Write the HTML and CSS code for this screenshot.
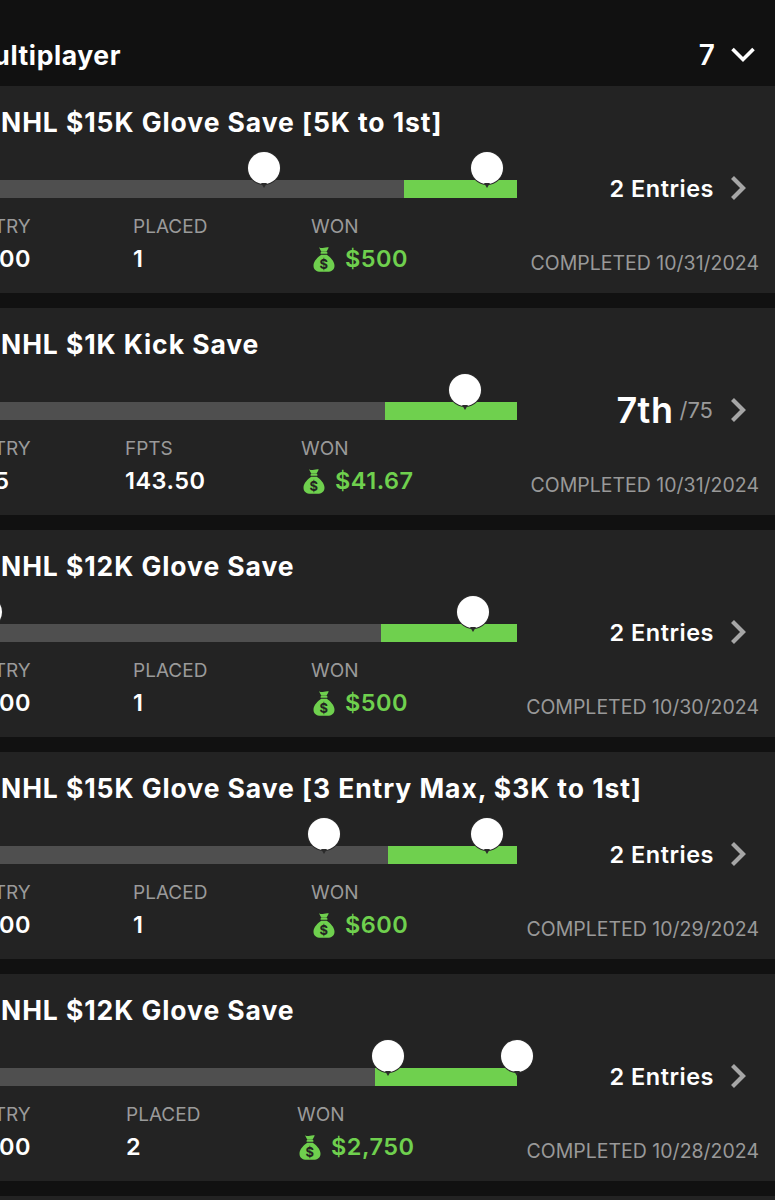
FILE: index.html
```html
<!DOCTYPE html>
<html lang="en">
<head>
<meta charset="utf-8">
<title>Multiplayer</title>
<link rel="stylesheet" href="styles.css">
</head>
<body>
<svg class="defs" width="0" height="0" aria-hidden="true">
  <symbol id="bag" viewBox="0 0 22 26">
    <path d="M6 1.200c1.600.9 3 1.200 5 .6 1.800-.6 3.400-.8 4.800-.4l-2.300 4.300H8.300z" fill="#6fd04e"/>
    <rect x="7.500" y="6" width="7" height="1.800" rx=".9" fill="#6fd04e"/>
    <path d="M8.200 8.800h5.600c3.400 2.300 7.700 6.400 7.700 11 0 4-3.300 6-7 6H7.500c-3.700 0-7-2-7-6 0-4.600 4.300-8.700 7.700-11z" fill="#6fd04e"/>
    <text x="11" y="22.500" text-anchor="middle" class="bag-dollar">$</text>
  </symbol>
  <symbol id="chev" viewBox="0 0 16 26">
    <path d="M2.500 2.500 13 13 2.500 23.500" fill="none" stroke="currentColor" stroke-width="4.200"/>
  </symbol>
</svg>
<main class="page">
  <header class="head">
    <h1 class="head-title">Multiplayer</h1>
    <div class="head-count">
      <span>7</span>
      <svg class="head-chev" viewBox="0 0 24 16"><path d="M1.500 2 12 12.500 22.500 2" fill="none" stroke="currentColor" stroke-width="3.600"/></svg>
    </div>
  </header>

  <article class="card">
    <h2 class="title">NHL $15K Glove Save [5K to 1st]</h2>
    <div class="mid">
      <div class="track">
        <div class="fill" style="width:113px"></div>
        <i class="pin" style="left:324px"></i>
        <i class="pin" style="left:547px"></i>
      </div>
      <div class="side"><span class="entries">2 Entries</span><svg class="chev"><use href="#chev"/></svg></div>
    </div>
    <div class="bottom">
      <div class="stats s-133">
        <div class="stat first"><span class="label">ENTRY</span><span class="val">$500</span></div>
        <div class="stat"><span class="label">PLACED</span><span class="val">1</span></div>
        <div class="stat"><span class="label">WON</span><span class="val won"><svg class="bag"><use href="#bag"/></svg>$500</span></div>
      </div>
      <span class="done">COMPLETED 10/31/2024</span>
    </div>
  </article>

  <article class="card">
    <h2 class="title">NHL $1K Kick Save</h2>
    <div class="mid">
      <div class="track">
        <div class="fill" style="width:132px"></div>
        <i class="pin" style="left:525px"></i>
      </div>
      <div class="side"><span class="rank">7th</span><span class="of">/75</span><svg class="chev"><use href="#chev"/></svg></div>
    </div>
    <div class="bottom">
      <div class="stats s-125">
        <div class="stat first"><span class="label">ENTRY</span><span class="val">$15</span></div>
        <div class="stat"><span class="label">FPTS</span><span class="val">143.50</span></div>
        <div class="stat"><span class="label">WON</span><span class="val won"><svg class="bag"><use href="#bag"/></svg>$41.67</span></div>
      </div>
      <span class="done">COMPLETED 10/31/2024</span>
    </div>
  </article>

  <article class="card">
    <h2 class="title">NHL $12K Glove Save</h2>
    <div class="mid">
      <div class="track">
        <div class="fill" style="width:136px"></div>
        <i class="pin" style="left:46px"></i>
        <i class="pin" style="left:533px"></i>
      </div>
      <div class="side"><span class="entries">2 Entries</span><svg class="chev"><use href="#chev"/></svg></div>
    </div>
    <div class="bottom">
      <div class="stats s-133">
        <div class="stat first"><span class="label">ENTRY</span><span class="val">$500</span></div>
        <div class="stat"><span class="label">PLACED</span><span class="val">1</span></div>
        <div class="stat"><span class="label">WON</span><span class="val won"><svg class="bag"><use href="#bag"/></svg>$500</span></div>
      </div>
      <span class="done">COMPLETED 10/30/2024</span>
    </div>
  </article>

  <article class="card">
    <h2 class="title">NHL $15K Glove Save [3 Entry Max, $3K to 1st]</h2>
    <div class="mid">
      <div class="track">
        <div class="fill" style="width:129px"></div>
        <i class="pin" style="left:384px"></i>
        <i class="pin" style="left:547px"></i>
      </div>
      <div class="side"><span class="entries">2 Entries</span><svg class="chev"><use href="#chev"/></svg></div>
    </div>
    <div class="bottom">
      <div class="stats s-133">
        <div class="stat first"><span class="label">ENTRY</span><span class="val">$500</span></div>
        <div class="stat"><span class="label">PLACED</span><span class="val">1</span></div>
        <div class="stat"><span class="label">WON</span><span class="val won"><svg class="bag"><use href="#bag"/></svg>$600</span></div>
      </div>
      <span class="done">COMPLETED 10/29/2024</span>
    </div>
  </article>

  <article class="card">
    <h2 class="title">NHL $12K Glove Save</h2>
    <div class="mid">
      <div class="track">
        <div class="fill" style="width:142px"></div>
        <i class="pin" style="left:448px"></i>
        <i class="pin" style="left:577px"></i>
      </div>
      <div class="side"><span class="entries">2 Entries</span><svg class="chev"><use href="#chev"/></svg></div>
    </div>
    <div class="bottom">
      <div class="stats s-126">
        <div class="stat first"><span class="label">ENTRY</span><span class="val">$500</span></div>
        <div class="stat"><span class="label">PLACED</span><span class="val">2</span></div>
        <div class="stat"><span class="label">WON</span><span class="val won"><svg class="bag"><use href="#bag"/></svg>$2,750</span></div>
      </div>
      <span class="done">COMPLETED 10/28/2024</span>
    </div>
  </article>

  <article class="card"></article>
</main>
</body>
</html>
```

FILE: styles.css
```css
* { box-sizing: border-box; }
html, body { margin: 0; height: 1200px; overflow: hidden; background: #111111; }
.defs { position: absolute; }
.page {
  width: 835px;
  height: 1200px;
  overflow: hidden;
  margin-left: -60px;
  font-family: Inter, "Liberation Sans", sans-serif;
  color: #fff;
}
.head {
  height: 86px;
  padding: 24px 20px 0 28px;
  display: flex;
  align-items: center;
  justify-content: space-between;
  background: #111111;
}
.head-title { margin: 0; font-size: 26.500px; font-weight: 700; letter-spacing: .6px; }
.head-count { display: flex; align-items: center; gap: 16px; font-size: 28px; font-weight: 600; }
.head-chev { width: 24px; height: 16px; display: block; }
.card {
  height: 207px;
  margin-bottom: 15px;
  background: #232323;
  display: flex;
  flex-direction: column;
}
.title {
  margin: 0;
  padding: 21px 0 0 61px;
  height: 68px;
  font-size: 26.500px;
  line-height: 30px;
  font-weight: 700;
  letter-spacing: .93px;
}
.mid { display: flex; height: 26px; margin-top: 26px; align-items: flex-start; }
.track {
  position: relative;
  width: 577px;
  height: 18px;
  background: #4f4f4f;
  display: flex;
  justify-content: flex-end;
}
.fill { height: 100%; background: #6fd04e; }
.pin {
  position: absolute;
  top: -28px;
  width: 32px;
  height: 32px;
  margin-left: -16px;
  border-radius: 50%;
  background: #fff;
  box-shadow: 0 0 0 1px #2b2b2b;
}
.pin::after {
  content: "";
  position: absolute;
  left: 50%;
  top: 31px;
  margin-left: -3px;
  border: 3px solid transparent;
  border-top: 5px solid #2b2b2b;
  border-bottom: 0;
}
.side {
  flex: 1;
  display: flex;
  align-items: center;
  justify-content: flex-end;
  height: 16px;
  padding-right: 29px;
}
.entries { font-size: 23.500px; font-weight: 600; letter-spacing: .5px; }
.rank { font-size: 36px; font-weight: 600; letter-spacing: .5px; }
.of { margin: 0 1px 0 6px; font-size: 22px; color: #9a9a9a; }
.chev { width: 16px; height: 26px; margin-left: 16px; color: #a6a6a6; flex: none; }
.bottom {
  display: flex;
  justify-content: space-between;
  align-items: flex-end;
  padding: 0 16px 19px 28px;
  margin-top: 7px;
  height: 80px;
}
.stats { display: flex; }
.s-133 .first { width: 165px; }
.s-133 .stat:nth-child(2) { width: 178px; }
.s-125 .first { width: 157px; }
.s-125 .stat:nth-child(2) { width: 176px; }
.s-126 .first { width: 158px; }
.s-126 .stat:nth-child(2) { width: 171px; }
.stat { display: flex; flex-direction: column; gap: 5px; white-space: nowrap; }
.label { font-size: 19px; line-height: 24px; color: #9a9a9a; }
.val { font-size: 23.500px; line-height: 30px; font-weight: 600; letter-spacing: .5px; display: flex; align-items: center; }
.won { color: #6fd04e; }
.bag { width: 22px; height: 26px; margin: 0 10px 0 2px; flex: none; }
.bag-dollar { font-family: Inter, "Liberation Sans", sans-serif; font-size: 13px; font-weight: 700; fill: #232323; }
.done { font-size: 19.500px; line-height: 26px; color: #999999; white-space: nowrap; margin-bottom: -2px; }
```
